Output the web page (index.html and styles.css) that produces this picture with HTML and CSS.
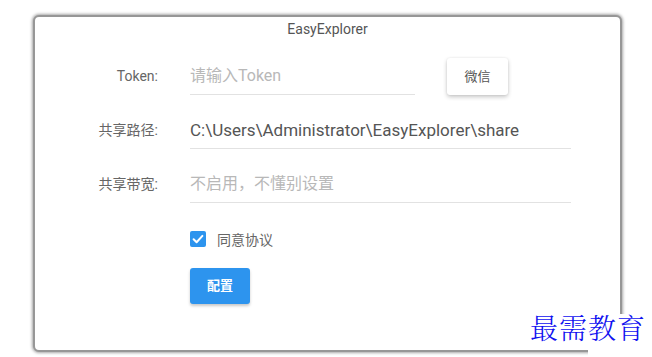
FILE: index.html
```html
<!DOCTYPE html>
<html lang="zh">
<head>
<meta charset="utf-8">
<link rel="stylesheet" href="styles.css">
</head>
<body>
<div class="card">
  <div class="title">EasyExplorer</div>
  <div class="form">
    <div class="label">Token:</div>
    <div class="field token-field">
      <div class="input token-input placeholder">请输入Token</div>
      <div class="btn-white">微信</div>
    </div>
    <div class="label">共享路径:</div>
    <div class="field"><div class="input wide path">C:\Users\Administrator\EasyExplorer\share</div></div>
    <div class="label">共享带宽:</div>
    <div class="field"><div class="input wide placeholder">不启用，不懂别设置</div></div>
    <div class="agree">
      <span class="checkbox"><svg viewBox="0 0 16 16" width="16" height="16"><path d="M3.6 8.3 L6.6 11.2 L12.4 4.9" fill="none" stroke="#fff" stroke-width="2" stroke-linecap="round" stroke-linejoin="round"/></svg></span>
      <span class="agree-text">同意协议</span>
    </div>
    <div class="submit-row"><div class="btn-blue">配置</div></div>
  </div>
</div>
<div class="watermark">最需教育</div>
</body>
</html>
```

FILE: styles.css
```css
html, body {
  margin: 0;
  background: #fff;
}
body {
  padding: 15px 30px 0 33px;
  font-family: Roboto, "Noto Sans CJK SC", sans-serif;
  position: relative;
  height: 357px;
  box-sizing: border-box;
  overflow: hidden;
}
.card {
  box-sizing: border-box;
  width: 589px;
  height: 337px;
  border: 2px solid #979797;
  border-radius: 6px;
  box-shadow: 0 0 3px 1px rgba(0,0,0,0.35);
  background: #fff;
  padding-top: 4px;
}
.title {
  text-align: center;
  font-size: 14px;
  line-height: 16px;
  color: #555;
}
.form {
  margin-top: 21px;
  display: grid;
  grid-template-columns: 123px 1fr;
  column-gap: 32px;
  row-gap: 17px;
  align-items: center;
}
.label {
  text-align: right;
  font-size: 14px;
  color: #666;
  line-height: 16px;
  padding-bottom: 1px;
}
.field {
  display: flex;
  align-items: center;
}
.input {
  box-sizing: border-box;
  height: 37px;
  line-height: 36px;
  border-bottom: 1px solid #e2e2e2;
  font-size: 16px;
  color: #555;
  white-space: nowrap;
}
.path {
  font-size: 17px;
}
.placeholder {
  color: #b8b8b8;
}
.token-input {
  width: 225px;
}
.wide {
  width: 381px;
}
.btn-white {
  margin-left: 32px;
  width: 61px;
  height: 37px;
  line-height: 37px;
  text-align: center;
  font-size: 13px;
  color: #555;
  background: #fff;
  border-radius: 3px;
  box-shadow: 0 2px 4px rgba(0,0,0,0.22), 0 0 2px rgba(0,0,0,0.08);
  margin-top: -1px;
}
.agree {
  grid-column: 2;
  margin-top: 11px;
  display: flex;
  align-items: center;
  height: 16px;
}
.checkbox {
  width: 16px;
  height: 16px;
  border-radius: 2px;
  background: #2d94ee;
  display: block;
}
.checkbox svg {
  display: block;
}
.agree-text {
  margin-left: 11px;
  font-size: 14px;
  color: #666;
}
.submit-row {
  grid-column: 2;
  margin-top: 4px;
}
.btn-blue {
  width: 60px;
  height: 36px;
  line-height: 36px;
  text-align: center;
  background: #2d94ee;
  color: #fff;
  font-size: 13px;
  font-weight: bold;
  border-radius: 3px;
  box-shadow: 0 2px 3px rgba(0,0,0,0.22);
}
.watermark {
  position: absolute;
  left: 530px;
  top: 310px;
  font-family: "AR PL UKai CN", "Noto Serif CJK SC", "Noto Sans CJK SC", serif;
  font-weight: 300;
  font-size: 28px;
  line-height: 34px;
  letter-spacing: 1px;
  color: #1010f0;
  z-index: 1;
}
.watermark::before {
  content: "";
  position: absolute;
  left: 58px;
  top: 4px;
  width: 58px;
  height: 44px;
  background: #fff;
  z-index: -1;
}
```
